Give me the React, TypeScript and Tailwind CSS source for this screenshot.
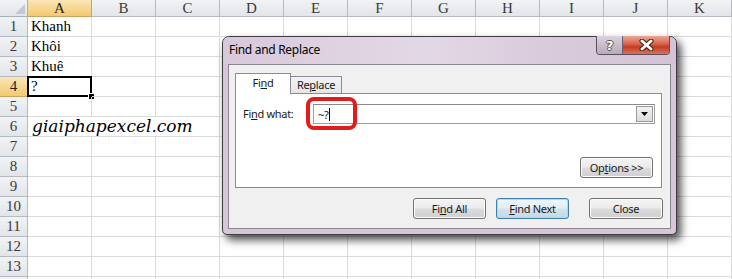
import clsx from "clsx"

const COLS = ["A", "B", "C", "D", "E", "F", "G", "H", "I", "J", "K"]
const ROWS = Array.from({ length: 14 }, (_, i) => i + 1)

const values: Record<number, string> = { 1: "Khanh", 2: "Khôi", 3: "Khuê", 4: "?" }

const headerBg = "bg-[linear-gradient(#f1f3f5,#e2e5e9)]"
const activeBg = "bg-[linear-gradient(#fbe6b8,#f3c96f)]"

function ColumnHeaders() {
  return (
    <div className="flex h-[17px]">
      <div className={clsx("relative w-[28px] shrink-0 border-r border-b border-[#a9b0b8]", headerBg)}>
        <svg className="absolute right-[2px] bottom-[2px]" width="10" height="10">
          <path d="M10 0 L10 10 L0 10 Z" fill="#c4c9cf" />
        </svg>
      </div>
      {COLS.map((c) => (
        <div
          key={c}
          className={clsx(
            "w-[64px] shrink-0 flex items-center justify-center border-r border-b text-[15px] leading-none pt-[1px]",
            c === "A" ? clsx(activeBg, "border-[#c9a45a] text-[#222]") : clsx(headerBg, "border-[#b5bac1] text-[#3a3a3a]")
          )}
        >
          {c}
        </div>
      ))}
    </div>
  )
}

function Row({ r }: { r: number }) {
  const cellCls = "w-[64px] shrink-0 border-r border-b border-[#d9dbdd]"
  return (
    <div className="flex h-[20px]">
      <div
        className={clsx(
          "w-[28px] shrink-0 flex items-center justify-center border-r border-b text-[15px] leading-none",
          r === 4 ? clsx(activeBg, "border-[#c9a45a] text-[#222]") : clsx(headerBg, "border-[#b5bac1] text-[#3a3a3a]")
        )}
      >
        {/* row 14 is only a sliver at the bottom edge */}
        {r < 14 && r}
      </div>
      {r === 6 ? (
        <>
          <div className="w-[192px] shrink-0 border-r border-b border-[#d9dbdd] pl-[4px] flex items-center whitespace-nowrap font-['DejaVu_Serif',serif] italic text-[17px] leading-none text-black">
            giaiphapexcel.com
          </div>
          {COLS.slice(3).map((c) => <div key={c} className={cellCls} />)}
        </>
      ) : (
        COLS.map((c) => (
          <div key={c} className={clsx(cellCls, "relative flex items-center pl-[3px] text-[15px] leading-none text-black")}>
            {c === "A" && values[r]}
            {c === "A" && r === 4 && (
              <>
                <div className="absolute left-[-1px] top-[-1px] w-[65px] h-[21px] border-2 border-black" />
                <div className="absolute right-[-4px] bottom-[-4px] w-[7px] h-[7px] bg-black border border-white" />
              </>
            )}
          </div>
        ))
      )}
    </div>
  )
}

function WinButton({ children, className }: { children: React.ReactNode; className?: string }) {
  return (
    <div
      className={clsx(
        "h-[21px] flex items-center justify-center rounded-[3px] border leading-none",
        className ?? "border-[#707070] bg-[linear-gradient(#f4f4f4_0%,#ebebeb_48%,#dcdcdc_52%,#cfcfcf_100%)] shadow-[inset_0_0_0_1px_#fcfcfc]"
      )}
    >
      {children}
    </div>
  )
}

function Dialog() {
  return (
    <div className="absolute left-[222px] top-[36px] w-[455px] h-[199px] flex flex-col rounded-t-[7px] rounded-b-[5px] border border-[#3e3a40] bg-[#d6c6d8] shadow-[4px_5px_9px_rgba(0,0,0,0.7)] font-['Noto_Sans',sans-serif] text-[11px] tracking-[-0.3px] text-[#1a1a1a]">
      {/* title bar */}
      <div className="h-[27px] flex rounded-t-[6px] bg-[linear-gradient(90deg,#d8c9da,#e3d8e5_45%,#dacbdc_70%,#d3c3d6)]">
        <span className="pl-[6px] self-center pb-[1px] text-[12px] text-black">Find and Replace</span>
        <div className="ml-auto mr-[6px] -mt-[1px] h-[19px] flex border border-t-0 border-[#5b4f5e] rounded-b-[4px] overflow-hidden">
          <div className="w-[26px] flex items-center justify-center bg-[linear-gradient(#ddd3e0,#c9bdcc_50%,#b7aabb)] border-r border-[#6d606f]">
            <span className="font-['DejaVu_Sans',sans-serif] font-bold text-[13px] leading-none text-white [text-shadow:1px_0_#555,-1px_0_#555,0_1px_#555,0_-1px_#555]">?</span>
          </div>
          <div className="w-[46px] flex items-center justify-center bg-[linear-gradient(#eaa896,#d6624c_45%,#c63b22_60%,#d8735c)]">
            <svg width="15" height="12" viewBox="0 0 15 12">
              <path d="M3 2 L12 10 M12 2 L3 10" stroke="#4a1a12" strokeWidth="5" strokeLinecap="round" />
              <path d="M3 2 L12 10 M12 2 L3 10" stroke="#ffffff" strokeWidth="3" strokeLinecap="round" />
            </svg>
          </div>
        </div>
      </div>

      {/* client area */}
      <div className="flex-1 mx-[5px] mb-[5px] border border-[#8a8790] bg-[#f0f0f0] flex flex-col">
        <div className="relative z-10 flex items-end ml-[6px] mt-[8px] h-[21px]">
          <div className="w-[56px] h-[21px] bg-white border border-b-0 border-[#898c95] flex items-center justify-center pb-[1px]">
            Fi<span className="underline">n</span>d
          </div>
          <div className="w-[51px] h-[17px] mb-[1px] border border-l-0 border-b-0 border-[#898c95] bg-[linear-gradient(#f3f3f3,#e5e5e5)] flex items-center justify-center">
            Re<span className="underline">p</span>lace
          </div>
        </div>
        <div className="ml-[6px] mr-[8px] -mt-[1px] h-[95px] border border-[#898c95] bg-white flex flex-col">
          <div className="flex items-center mt-[10px] ml-[7px]">
            <span className="w-[70px]">
              Fi<span className="underline">n</span>d what:
            </span>
            <div className="relative w-[342px] h-[20px] border border-[#a0a0a0] border-t-[#8a8a8a] flex items-center pl-[4px]">
              <span className="text-[11px] leading-none">~?</span>
              <span className="w-px h-[13px] bg-black ml-[1px]" />
              <div className="absolute right-[1px] top-[1px] w-[17px] h-[16px] border border-[#9a9a9a] bg-[linear-gradient(#f2f2f2,#dcdcdc)] flex items-center justify-center">
                <svg width="7" height="4" viewBox="0 0 7 4">
                  <path d="M0 0 L7 0 L3.5 4 Z" fill="#000" />
                </svg>
              </div>
            </div>
          </div>
          <div className="flex justify-end mt-[33px] mr-[8px]">
            <WinButton>
              <span className="w-[71px] text-center">
                Op<span className="underline">t</span>ions &gt;&gt;
              </span>
            </WinButton>
          </div>
        </div>
        <div className="flex items-center justify-end mt-[10px] mr-[7px]">
          <WinButton>
            <span className="w-[71px] text-center">
              Fi<span className="underline">n</span>d All
            </span>
          </WinButton>
          <div className="ml-[10px]">
            <WinButton className="border-[#3c7fb1] bg-[linear-gradient(#eef6fb_0%,#e2eef6_48%,#d2e3ee_52%,#c4d8e6_100%)] shadow-[inset_0_0_0_1px_#9fe0f8]">
              <span className="w-[71px] text-center">
                <span className="underline">F</span>ind Next
              </span>
            </WinButton>
          </div>
          <div className="ml-[20px]">
            <WinButton>
              <span className="w-[72px] text-center">Close</span>
            </WinButton>
          </div>
        </div>
      </div>
    </div>
  )
}

export default function App() {
  return (
    <div className="relative w-[732px] h-[279px] overflow-hidden bg-white font-['Liberation_Serif',serif]">
      <ColumnHeaders />
      {ROWS.map((r) => (
        <Row key={r} r={r} />
      ))}
      <Dialog />
      {/* red highlight around the search text */}
      <div className="absolute left-[306px] top-[97px] w-[51px] h-[33px] border-[4px] border-[#e01d1d] rounded-[8px]" />
    </div>
  )
}
